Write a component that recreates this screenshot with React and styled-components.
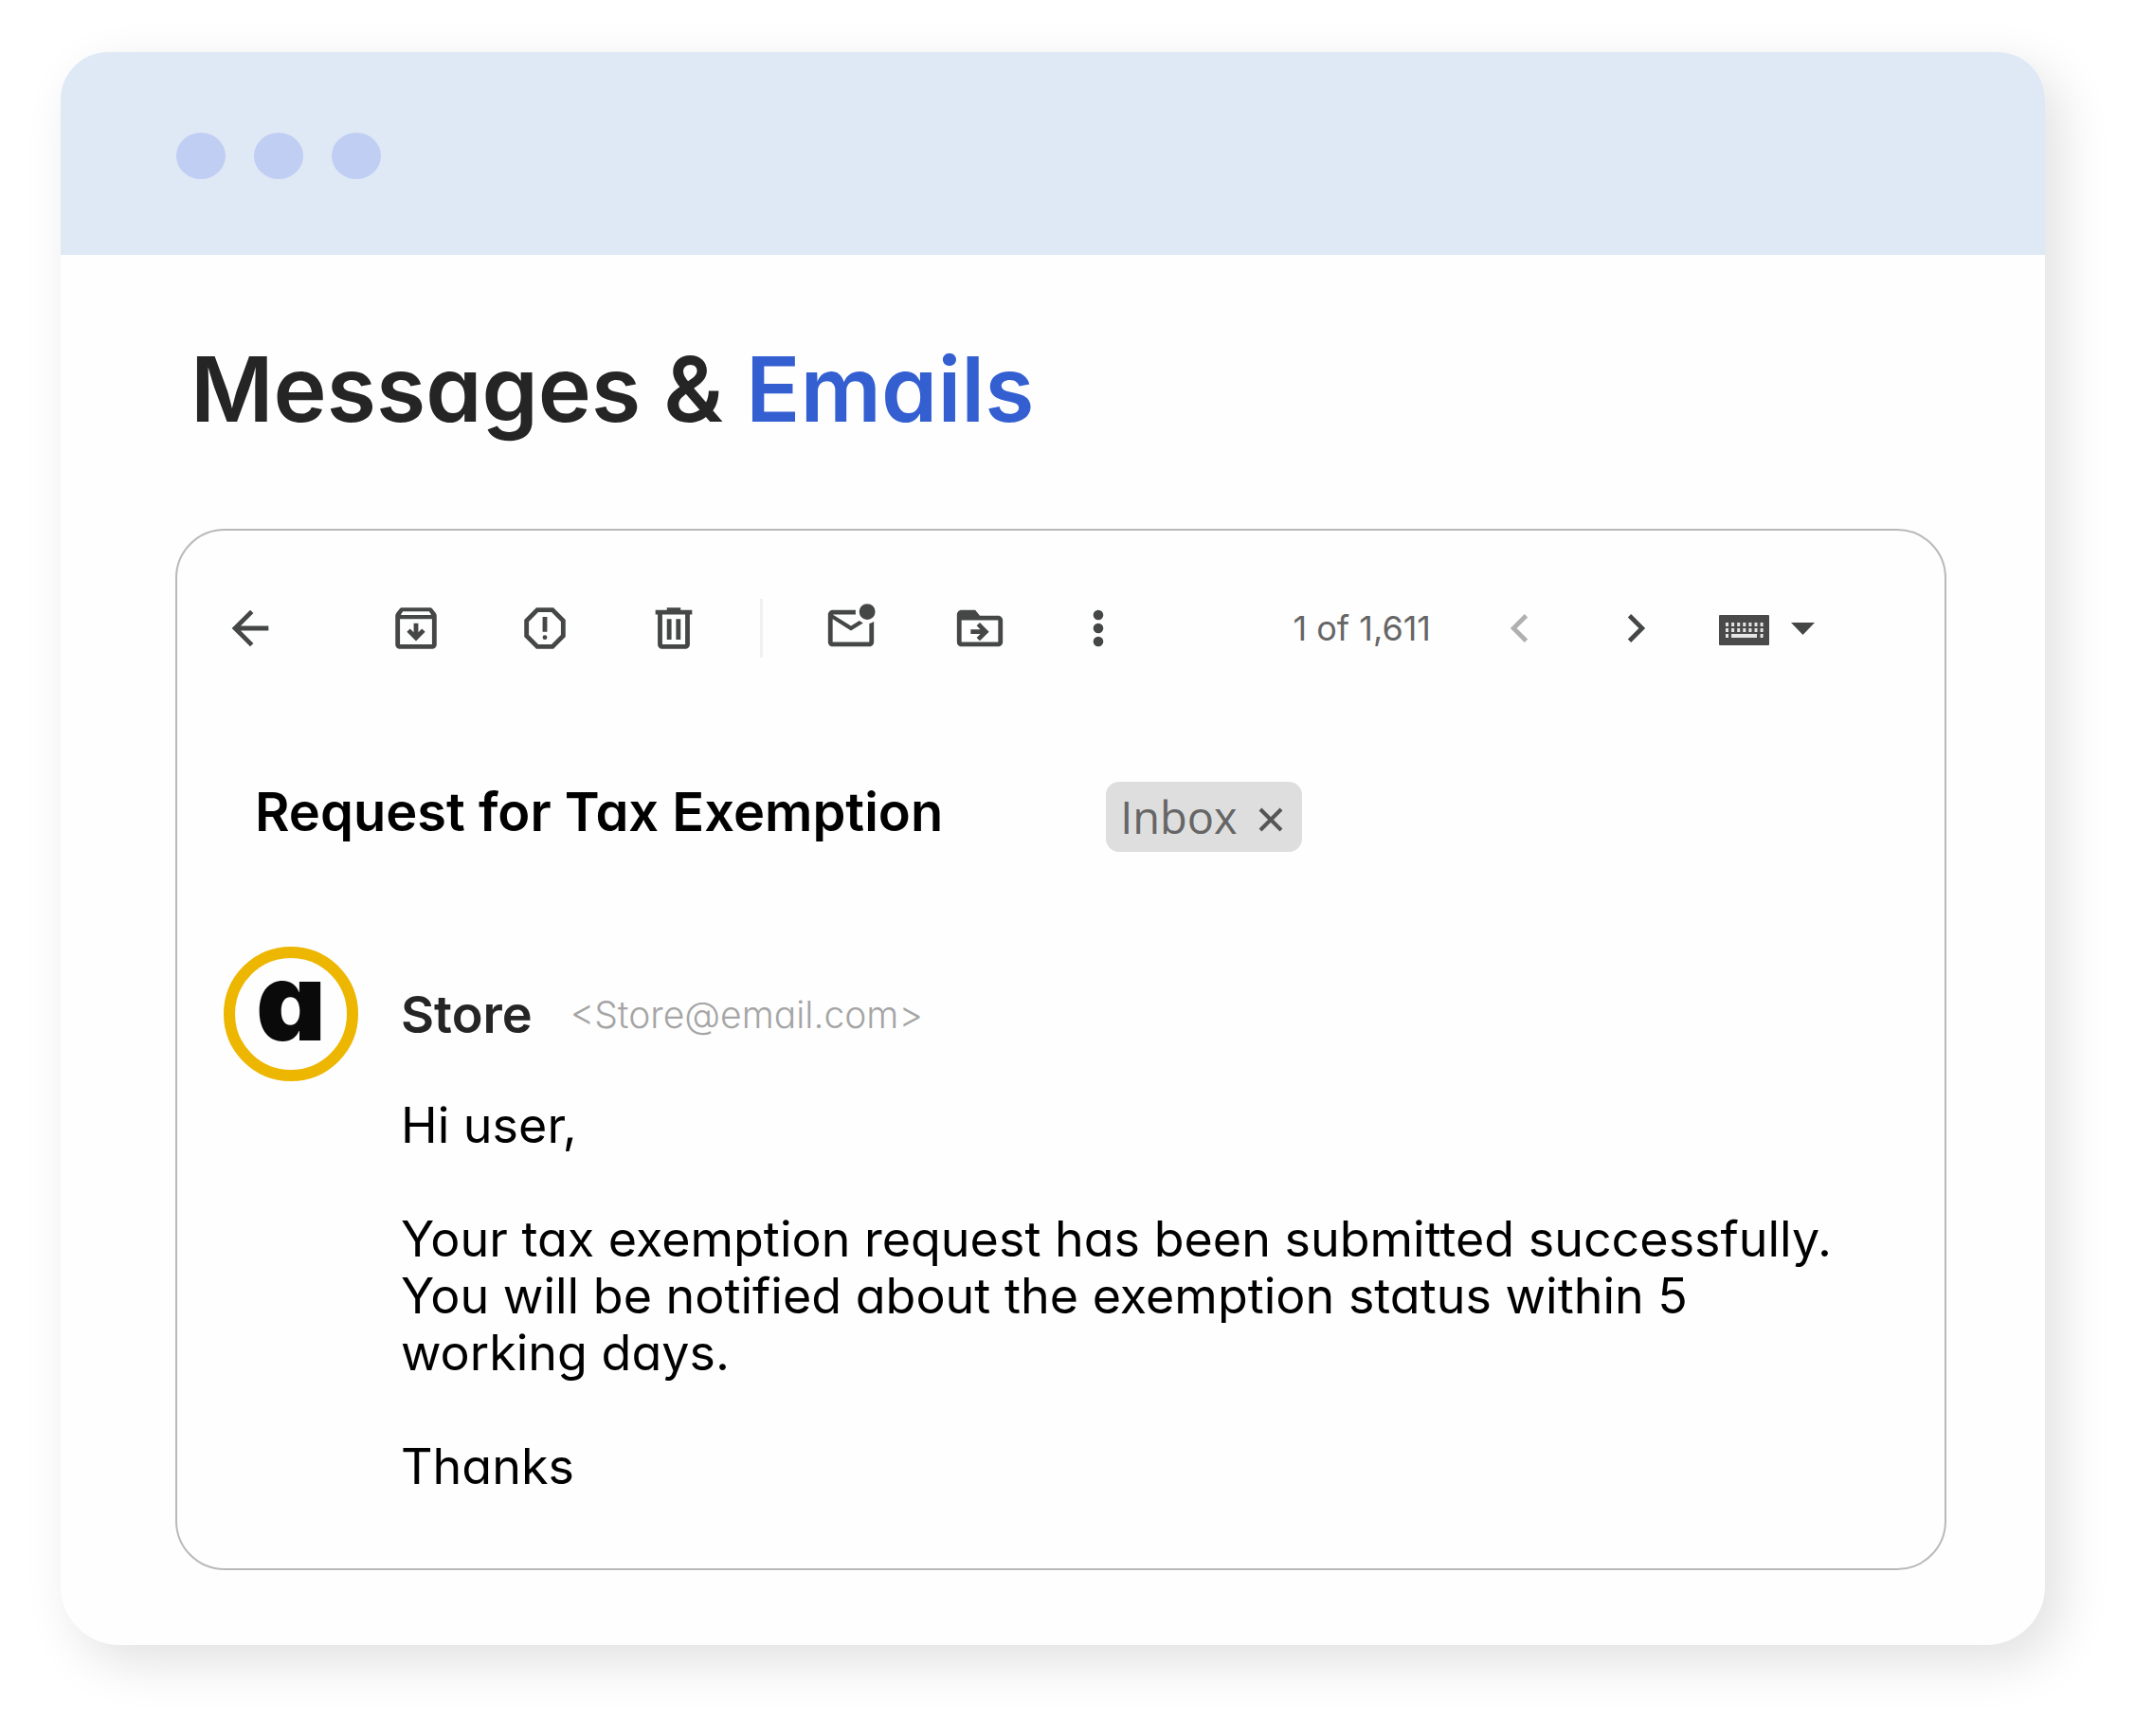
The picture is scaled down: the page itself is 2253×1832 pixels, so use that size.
import React from 'react';
import styled, { createGlobalStyle } from 'styled-components';

const GlobalStyle = createGlobalStyle`
	* {
		box-sizing: border-box;
	}
	body {
		margin: 0;
		background: #fff;
		font-family: Inter, 'Open Sans', sans-serif;
		font-feature-settings: 'cv11';
		color: #000;
	}
	h1, h2, h3, p {
		margin: 0;
	}
	button {
		padding: 0;
		border: 0;
		background: none;
		font: inherit;
		cursor: pointer;
	}
`;

const Page = styled.main`
	padding: 55px 95px 96px 64px;
`;

const Window = styled.section`
	border-radius: 50px 50px 62px 62px;
	background: #fefefe;
	box-shadow: 16px 18px 54px rgba(0, 0, 0, 0.12);
`;

const TitleBar = styled.div`
	display: flex;
	align-items: center;
	gap: 30px;
	height: 214px;
	padding: 4px 122px 0;
	border-radius: 50px 50px 0 0;
	background: #dfe9f5;
`;

const Dot = styled.span`
	width: 52px;
	height: 49px;
	border-radius: 50%;
	background: #c1cef3;
`;

const Content = styled.div`
	padding: 87px 104px 79px 121px;
`;

const Heading = styled.h1`
	padding-left: 16px;
	font-size: 95px;
	line-height: 110px;
	font-weight: 600;
	color: #252525;
`;

const Accent = styled.span`
	color: #335fd1;
`;

const Card = styled.article`
	margin-top: 92px;
	padding: 72px 48px 77px;
	border: 2px solid #b9b9b9;
	border-radius: 52px;
`;

const Toolbar = styled.div`
	display: flex;
	align-items: center;
	padding-right: 89px;
	color: #444746;
`;

const ToolGroup = styled.div`
	display: flex;
	align-items: center;
	gap: 78px;
	margin-left: ${({ $offset }) => $offset || 0}px;
`;

const Pager = styled.div`
	display: flex;
	align-items: center;
	gap: 58px;
	margin-left: auto;
`;

const PagerSteps = styled.div`
	display: flex;
	gap: 66px;
`;

const IconButton = styled.button`
	display: flex;
	height: 58px;
	align-items: center;
	gap: 23px;
	color: ${({ $muted }) => ($muted ? '#b0b0b0' : '#444746')};
`;

const Divider = styled.span`
	width: 3px;
	height: 62px;
	margin-left: 62px;
	background: #eff0f1;
`;

const Count = styled.span`
	padding-right: 6px;
	font-size: 36px;
	line-height: 58px;
	color: #666;
`;

const SubjectRow = styled.div`
	display: flex;
	align-items: flex-start;
	gap: 172px;
	margin-top: 131px;
	padding-left: 34px;
`;

const Subject = styled.h2`
	font-size: 56px;
	line-height: 64px;
	font-weight: 600;
`;

const Label = styled.span`
	display: flex;
	align-items: center;
	gap: 22px;
	height: 74px;
	padding: 0 20px 0 15px;
	border-radius: 14px;
	background: #dedede;
	font-family: 'Open Sans', sans-serif;
	font-size: 47px;
	color: #666;
`;

const LabelRemove = styled.button`
	display: flex;
	padding-top: 6px;
	color: #555;
`;

const Message = styled.div`
	display: grid;
	grid-template-columns: 142px 1fr;
	column-gap: 45px;
	row-gap: 17px;
	margin-top: 100px;
	padding-left: 1px;
`;

const Avatar = styled.div`
	display: flex;
	align-items: center;
	justify-content: center;
	height: 142px;
	padding-bottom: 26px;
	border: 12px solid #edb600;
	border-radius: 50%;
	font-size: 114px;
	line-height: 80px;
	font-weight: 900;
	color: #0a0a0a;
`;

const Sender = styled.div`
	display: flex;
	align-items: center;
	gap: 40px;
`;

const SenderName = styled.h3`
	font-size: 54px;
	font-weight: 600;
	color: #252525;
`;

const SenderAddress = styled.a`
	font-size: 39px;
	font-weight: 300;
	color: #a5a5a5;
	text-decoration: none;
`;

const Body = styled.div`
	grid-column: 2;
	display: grid;
	gap: 60px;
	font-size: 52px;
	line-height: 60px;
`;

const ICONS = {
	back: 'M20 11H7.83l5.59-5.59L12 4l-8 8 8 8 1.41-1.41L7.83 13H20v-2z',
	archive:
		'M20.54 5.23l-1.39-1.68C18.88 3.21 18.47 3 18 3H6c-.47 0-.88.21-1.16.55L3.46 5.23C3.17 5.57 3 6.02 3 6.5V19c0 1.1.9 2 2 2h14c1.1 0 2-.9 2-2V6.5c0-.48-.17-.93-.46-1.27zM6.24 4.7h11.52l.9 1.5H5.35l.89-1.5zM5 19V8h14v11H5z M11 9.8v4l-1.6-1.6L8 13.6l4 4 4-4-1.4-1.4-1.6 1.6v-4z',
	report:
		'M15.73 3H8.27L3 8.27v7.46L8.27 21h7.46L21 15.73V8.27L15.73 3zM19 14.9L14.9 19H9.1L5 14.9V9.1L9.1 5h5.8L19 9.1v5.8z M11 7h2v6.5h-2z M12 15a1 1 0 1 0 0 2 1 1 0 0 0 0-2z',
	trash: 'M15 4V3H9v1H4v2h1v13c0 1.1.9 2 2 2h10c1.1 0 2-.9 2-2V6h1V4h-5zm2 15H7V6h10v13z M9 8h2v9H9z M13 8h2v9h-2z',
	unread:
		'M22 8.98V18c0 1.1-.9 2-2 2H4c-1.1 0-2-.9-2-2V6c0-1.1.9-2 2-2h10.1c-.06.32-.1.66-.1 1 0 .34.04.68.1 1H4l8 5 3.67-2.29c.47.43 1.02.76 1.63.98L12 13 4 8v10h16V9.9c.74-.15 1.42-.48 2-.92zM15.6 4.8a3.5 3.5 0 1 0 7 0 3.5 3.5 0 0 0-7 0z',
	move: 'M20 6.5h-8L10 4H4c-1.1 0-2 .9-2 2v12c0 1.1.9 2 2 2h16c1.1 0 2-.9 2-2V8.5c0-1.1-.9-2-2-2zm0 11.5H4V8.5h16V18z M12 9.5l-1.4 1.4 1.6 1.6H8v2h4.2l-1.6 1.6L12 17.5l4-4z',
	more: 'M12 4a2.2 2.2 0 1 0 0 4.4A2.2 2.2 0 0 0 12 4zm0 5.8a2.2 2.2 0 1 0 0 4.4 2.2 2.2 0 0 0 0-4.4zm0 5.8a2.2 2.2 0 1 0 0 4.4 2.2 2.2 0 0 0 0-4.4z',
	prev: 'M15.8 7.2 14.4 5.8l-6.2 6.2 6.2 6.2 1.4-1.4L11 12z',
	next: 'M8.2 7.2 9.6 5.8l6.2 6.2-6.2 6.2-1.4-1.4L13 12z',
};

const Icon = ({ name }) => (
	<svg width="58" height="58" viewBox="0 0 24 24" fill="currentColor" fillRule="evenodd" aria-hidden="true">
		<path d={ICONS[name]} />
	</svg>
);

const Tool = ({ name, label, muted }) => (
	<IconButton type="button" aria-label={label} $muted={muted}>
		<Icon name={name} />
	</IconButton>
);

const keyColumns = [0, 1, 2, 3, 4, 5, 6];

const KeyboardIcon = () => (
	<svg width="53" height="37" viewBox="0 -6 53 37" aria-hidden="true">
		<rect y="-2" width="53" height="32" rx="1" fill="#4a4a4a" />
		<g fill="#e4e4e4">
			{keyColumns.map((col) => (
				<React.Fragment key={col}>
					<rect x={7 + col * 6.1} y="6" width="3" height="4" />
					<rect x={7 + col * 6.1} y="12" width="3" height="4" />
				</React.Fragment>
			))}
			<rect x="7" y="18" width="3" height="4" />
			<rect x="13" y="18" width="27" height="4" />
			<rect x="43.6" y="18" width="3" height="4" />
		</g>
	</svg>
);

const App = () => (
	<Page>
		<GlobalStyle />
		<Window>
			<TitleBar>
				<Dot />
				<Dot />
				<Dot />
			</TitleBar>
			<Content>
				<Heading>
					Messages &amp; <Accent>Emails</Accent>
				</Heading>
				<Card>
					<Toolbar>
						<Tool name="back" label="Back" />
						<ToolGroup $offset={117}>
							<Tool name="archive" label="Archive" />
							<Tool name="report" label="Report spam" />
							<Tool name="trash" label="Delete" />
						</ToolGroup>
						<Divider />
						<ToolGroup $offset={64}>
							<Tool name="unread" label="Mark as unread" />
							<Tool name="move" label="Move to" />
						</ToolGroup>
						<ToolGroup $offset={67}>
							<Tool name="more" label="More" />
						</ToolGroup>
						<Pager>
							<Count>1 of 1,611</Count>
							<PagerSteps>
								<Tool name="prev" label="Newer" muted />
								<Tool name="next" label="Older" />
							</PagerSteps>
							<IconButton type="button" aria-label="Input tools">
								<KeyboardIcon />
								<svg width="25" height="13" viewBox="0 0 25 13" aria-hidden="true">
									<path d="M0 0h25L12.5 13z" fill="currentColor" />
								</svg>
							</IconButton>
						</Pager>
					</Toolbar>
					<SubjectRow>
						<Subject>Request for Tax Exemption</Subject>
						<Label>
							Inbox
							<LabelRemove type="button" aria-label="Remove label">
								<svg width="26" height="26" viewBox="0 0 26 26" fill="none" stroke="currentColor" strokeWidth="4" aria-hidden="true">
									<path d="M2 2l22 22M24 2L2 24" />
								</svg>
							</LabelRemove>
						</Label>
					</SubjectRow>
					<Message>
						<Avatar>a</Avatar>
						<Sender>
							<SenderName>Store</SenderName>
							<SenderAddress href="mailto:Store@email.com">&lt;Store@email.com&gt;</SenderAddress>
						</Sender>
						<Body>
							<p>Hi user,</p>
							<p>
								Your tax exemption request has been submitted successfully.
								<br />
								You will be notified about the exemption status within 5
								<br />
								working days.
							</p>
							<p>Thanks</p>
						</Body>
					</Message>
				</Card>
			</Content>
		</Window>
	</Page>
);

export default App;
